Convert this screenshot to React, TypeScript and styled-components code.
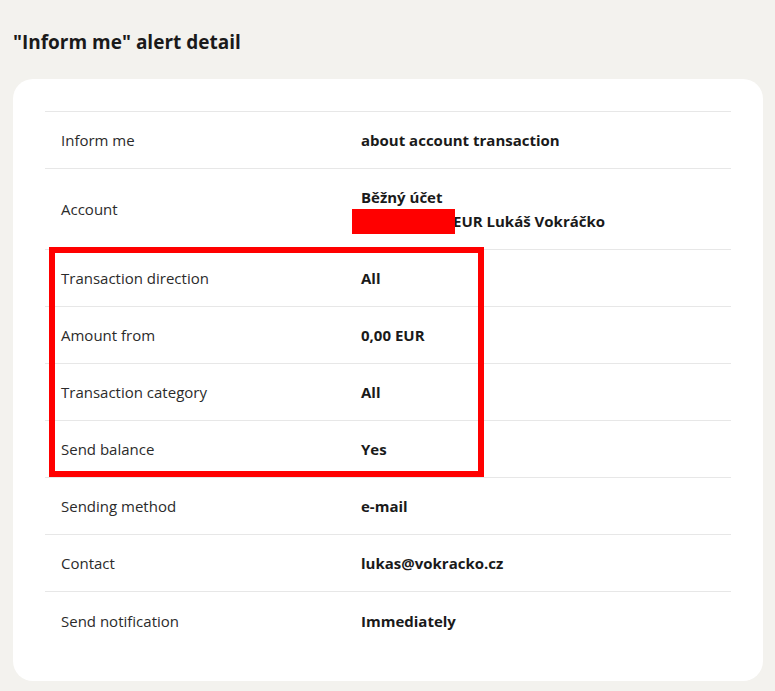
import React from "react";
import styled, { createGlobalStyle } from "styled-components";

const GlobalStyle = createGlobalStyle`
  html, body { margin: 0; padding: 0; background: #f3f2ee; }
  body { font-family: "Open Sans", Lato, sans-serif; color: #1e1e1e; }
  * { box-sizing: border-box; }
`;

const Page = styled.div`
  padding: 31px 12px 11px 13px;
  width: 775px;
  min-height: 691px;
`;

const Title = styled.h1`
  margin: 0 0 26px 0;
  font-size: 19px;
  line-height: 22px;
  font-weight: 700;
  color: #1a1a1a;
`;

const Card = styled.section`
  background: #ffffff;
  border-radius: 20px;
  padding: 32px;
  width: 750px;
`;

const List = styled.dl`
  margin: 0;
  border-top: 1px solid #e7e7e7;
`;

const Group = styled.div`
  position: relative;
`;

const Highlight = styled.div`
  position: absolute;
  top: -3px;
  left: 4px;
  width: 435px;
  height: 230px;
  border: 6px solid #ff0000;
  pointer-events: none;
`;

const Row = styled.div<{ $tall?: boolean }>`
  display: grid;
  grid-template-columns: 300px 1fr;
  align-items: center;
  min-height: ${(p) => (p.$tall ? 81 : 57)}px;
  padding: 0 16px;
  border-bottom: 1px solid #e7e7e7;
  &:last-child { border-bottom: none; }
`;

const Label = styled.dt`
  margin: 0;
  font-size: 15px;
  line-height: 24px;
  font-weight: 400;
  color: #2b2b2b;
`;

const Value = styled.dd`
  margin: 0;
  font-size: 15px;
  line-height: 24px;
  font-weight: 700;
  color: #1a1a1a;
`;

const Line = styled.div`
  white-space: nowrap;
`;

const Redacted = styled.span`
  position: relative;
  display: inline-block;
  width: 92px;
  height: 24px;
  vertical-align: top;
  &::before {
    content: "";
    position: absolute;
    left: -9px;
    top: 0;
    width: 103px;
    height: 25px;
    background: #ff0000;
    z-index: 1;
  }
`;

type Item = { label: string; value: React.ReactNode; tall?: boolean };

const top: Item[] = [
  { label: "Inform me", value: "about account transaction" },
  {
    label: "Account",
    tall: true,
    value: (
      <>
        <Line>Běžný účet</Line>
        <Line>
          <Redacted />EUR Lukáš Vokráčko
        </Line>
      </>
    ),
  },
];

const highlighted: Item[] = [
  { label: "Transaction direction", value: "All" },
  { label: "Amount from", value: "0,00 EUR" },
  { label: "Transaction category", value: "All" },
  { label: "Send balance", value: "Yes" },
];

const bottom: Item[] = [
  { label: "Sending method", value: "e-mail" },
  { label: "Contact", value: "lukas@vokracko.cz" },
  { label: "Send notification", value: "Immediately" },
];

const renderRow = (it: Item) => (
  <Row key={it.label} $tall={it.tall}>
    <Label>{it.label}</Label>
    <Value>{it.value}</Value>
  </Row>
);

export default function App() {
  return (
    <>
      <GlobalStyle />
      <Page>
        <Title>"Inform me" alert detail</Title>
        <Card>
          <List>
            {top.map(renderRow)}
            <Group>
              {highlighted.map(renderRow)}
              <Highlight />
            </Group>
            {bottom.map(renderRow)}
          </List>
        </Card>
      </Page>
    </>
  );
}
